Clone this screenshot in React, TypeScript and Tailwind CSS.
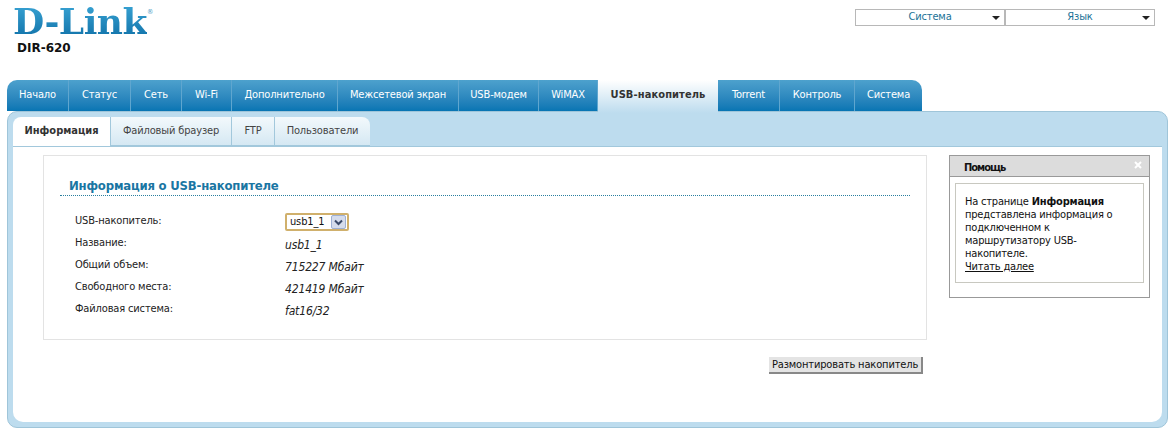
import React from "react";

const font = "font-['DejaVu_Sans_Condensed','Liberation_Sans',sans-serif]";

const tabs = [
  { name: "Начало", w: "w-[62px]", first: true },
  { name: "Статус", w: "w-[62px]" },
  { name: "Сеть", w: "w-[51px]" },
  { name: "Wi-Fi", w: "w-[50px]" },
  { name: "Дополнительно", w: "w-[106px]" },
  { name: "Межсетевой экран", w: "w-[121px]" },
  { name: "USB-модем", w: "w-[80px]" },
  { name: "WiMAX", w: "w-[59px]" },
  { name: "USB-накопитель", w: "w-[120px]", active: true },
  { name: "Torrent", w: "w-[62px]" },
  { name: "Контроль", w: "w-[75px]" },
  { name: "Система", w: "w-[67px]", last: true },
];

const rows = [
  { label: "Название:", value: "usb1_1" },
  { label: "Общий объем:", value: "715227 Мбайт" },
  { label: "Свободного места:", value: "421419 Мбайт" },
  { label: "Файловая система:", value: "fat16/32" },
];

const TopSelect = ({ text }: { text: string }) => (
  <div className="relative flex h-[17px] w-[150px] items-center justify-center border border-[#b8b8b8] bg-white text-[11px] text-[#1a7297]">
    <span>{text}</span>
    <span className="absolute right-[4px] top-[6px] h-0 w-0 border-x-[4px] border-t-[4px] border-x-transparent border-t-[#222]" />
  </div>
);

const MainTab = ({ name, w, first, last, active }: { name: string; w: string; first?: boolean; last?: boolean; active?: boolean }) => {
  if (active) {
    return (
      <div className={`${w} relative z-10 -mb-[2px] flex h-[33px] items-center justify-center bg-gradient-to-b from-white to-[#bddcee] pb-[3px] text-[11px] font-bold tracking-[0.1px] text-[#333]`}>
        {name}
      </div>
    );
  }
  return (
    <div
      className={`${w} flex h-[31px] items-center justify-center border-r border-[#5fa6cf] bg-gradient-to-b from-[#4da1cd] to-[#0675b3] text-[11px] text-white ${first ? "rounded-tl-[10px]" : ""} ${last ? "rounded-tr-[10px] border-r-0" : ""}`}
    >
      {name}
    </div>
  );
};

const SubTab = ({ name, w, active, last }: { name: string; w: string; active?: boolean; last?: boolean }) => (
  <div
    className={`${w} flex h-[29px] items-center justify-center text-[11px] ${active ? "rounded-tl-[8px] bg-white font-bold tracking-normal text-[#333]" : "border-b border-l border-[#a2c8dc] bg-gradient-to-b from-[#f3f9fc] to-[#d5e8f3] text-[#444]"} ${last ? "rounded-tr-[8px]" : ""}`}
  >
    {name}
  </div>
);

const App = () => {
  return (
    <div className={`h-[434px] w-[1174px] overflow-hidden bg-white tracking-[-0.15px] text-black ${font}`}>
      {/* Header */}
      <div className="flex h-[80px] justify-between">
        <div className="pl-[13px] pt-[2px]">
          <div className="flex h-[39px] items-start">
            <span className="bg-gradient-to-b from-[#3aa6d6] to-[#0b6fa6] bg-clip-text font-['DejaVu_Serif',serif] text-[36px] font-bold leading-[39px] tracking-[-0.5px] text-transparent">
              D-Link
            </span>
            <span className="mt-[6px] text-[7px] leading-[8px] text-[#4a9cc4]">®</span>
          </div>
          <div className="mt-[1px] pl-[4px] font-['DejaVu_Sans',sans-serif] text-[12px] font-bold leading-[13px] tracking-normal text-[#111]">DIR-620</div>
        </div>
        <div className="flex pr-[19px] pt-[9px]">
          <TopSelect text="Система" />
          <TopSelect text="Язык" />
        </div>
      </div>

      {/* Main tabs */}
      <div className="flex items-start pl-[7px]">
        {tabs.map((t) => (
          <MainTab key={t.name} {...t} />
        ))}
      </div>

      {/* Panel */}
      <div className="ml-[7px] h-[317px] w-[1161px] rounded-[10px] border border-[#9fc5d9] bg-[#bddcee] px-[5px] pt-[5px]">
        <div className="flex">
          <SubTab name="Информация" w="w-[97px]" active />
          <SubTab name="Файловый браузер" w="w-[121px]" />
          <SubTab name="FTP" w="w-[43px]" />
          <SubTab name="Пользователи" w="w-[96px]" last />
        </div>

        <div className="h-[276px] rounded-b-[10px] border-t border-[#a2c8dc] bg-white pl-[30px] pr-[12px] pt-[8px]">
          <div className="flex items-start justify-between">
            {/* Info box */}
            <div className="h-[185px] w-[884px] border border-[#e3e3e3] px-[16px] pt-[22px]">
              <div className="border-b border-dotted border-[#2a7f9f] pb-[2px] pl-[9px] text-[13px] font-bold leading-[15px] tracking-[-0.2px] text-[#1a76a3]">
                Информация о USB-накопителе
              </div>
              <div className="pl-[15px] pt-[16px] text-[11px]">
                <div className="flex h-[22px] items-center">
                  <span className="-mt-[3px] w-[210px] text-[#222]">USB-накопитель:</span>
                  <div className="-mt-[2px] flex h-[18px] w-[64px] items-center rounded-[2px] border-2 border-[#d0b06c] bg-white pl-[3px] text-[#111]">
                    <span className="w-[41px]">usb1_1</span>
                    <span className="flex h-[14px] w-[15px] items-center justify-center rounded-[2px] border border-[#9eb0d4] bg-[#d5dcec]">
                      <svg width="9" height="7" viewBox="0 0 9 7">
                        <path d="M1 1.5 4.5 5 8 1.5" fill="none" stroke="#3a4a6a" strokeWidth="2" />
                      </svg>
                    </span>
                  </div>
                </div>
                {rows.map((r) => (
                  <div key={r.label} className="flex h-[22px] items-center">
                    <span className="-mt-[4px] w-[210px] text-[#222]">{r.label}</span>
                    <span className="text-[12px] italic text-[#222]">{r.value}</span>
                  </div>
                ))}
              </div>
            </div>

            {/* Help */}
            <div className="h-[143px] w-[201px] border border-[#999] bg-white">
              <div className="relative flex h-[21px] items-center border-b border-[#999] bg-[#dcdcdc] pl-[14px] pt-[4px] text-[11px] font-bold tracking-[-1px] text-[#111]">
                Помощь
                <svg className="absolute right-[7px] top-[5px]" width="8" height="8" viewBox="0 0 8 8">
                  <path d="M1 1l6 6M7 1 1 7" stroke="#fff" strokeWidth="2" />
                </svg>
              </div>
              <div className="mx-[5px] mt-[6px] h-[100px] border border-[#c8c8c0] px-[9px] pt-[11px] text-[11px] leading-[13px] tracking-[-0.2px] text-[#111]">
                На странице <b>Информация</b> представлена информация о подключенном к маршрутизатору USB-накопителе.
                <br />
                <span className="underline">Читать далее</span>
              </div>
            </div>
          </div>

          {/* Unmount */}
          <div className="flex pl-[726px] pt-[17px]">
            <button className="h-[17px] w-[154px] border-b-2 border-r-2 border-[#888] bg-[#e4e4e4] text-[11px] leading-[14px] text-[#111]">
              Размонтировать накопитель
            </button>
          </div>
        </div>
      </div>
    </div>
  );
};

export default App;
